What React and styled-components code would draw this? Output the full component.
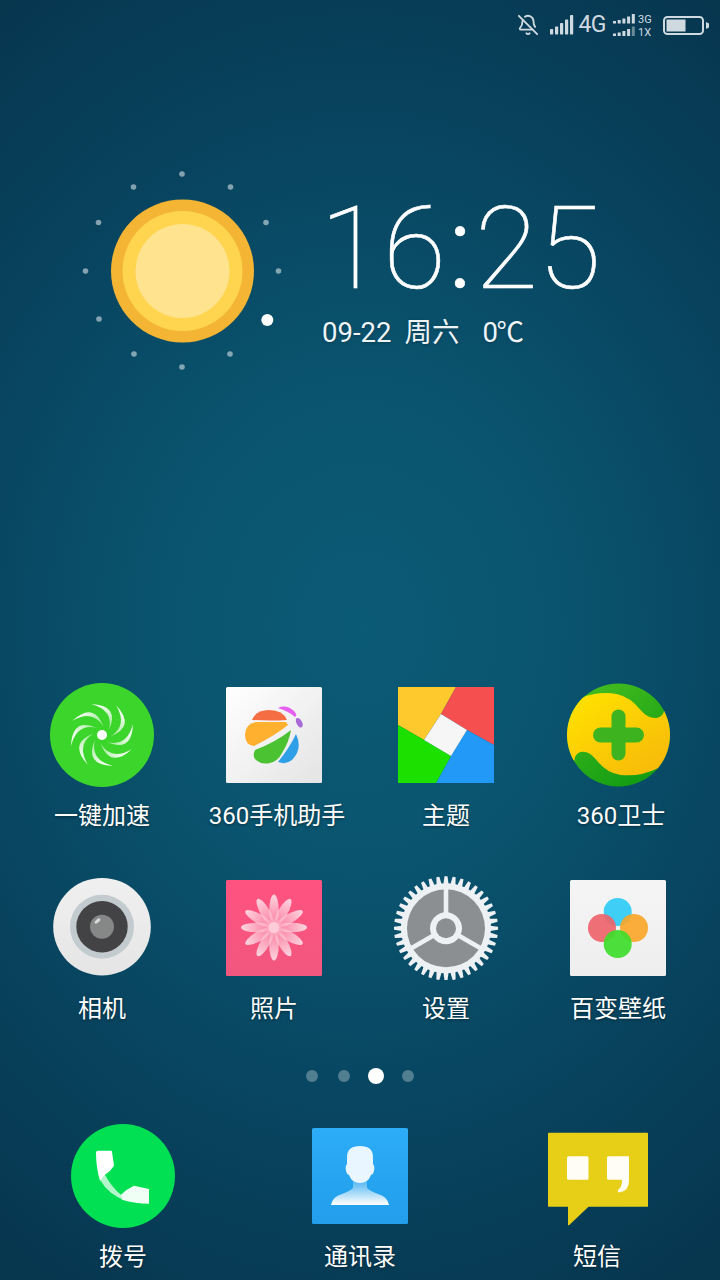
import React from 'react'
import styled, { createGlobalStyle } from 'styled-components'
import { BellOff } from 'lucide-react'

const GlobalStyle = createGlobalStyle`
html, body {
  margin: 0;
  padding: 0;
  width: 720px;
  height: 1280px;
  overflow: hidden;
}
* {
  box-sizing: border-box;
}
`

const Page = styled.div`
width: 720px;
height: 1280px;
overflow: hidden;
color: #fff;
font-family: Roboto, "Noto Sans CJK SC", sans-serif;
background: radial-gradient(ellipse 620px 760px at 50% 49%, #0b5a76 0%, #0a546f 32%, #08445f 66%, #07364f 100%);
`

const StatusBar = styled.div`
display: flex;
justify-content: flex-end;
align-items: center;
height: 50px;
padding-right: 11px;
color: #cfdae0;
`

const NetworkText = styled.span`
font-size: 23px;
font-weight: 400;
line-height: 50px;
margin: 0 7px 0 4px;
letter-spacing: -0.5px;
`

const Widget = styled.div`
display: flex;
align-items: flex-start;
height: 220px;
margin-top: 110px;
padding-left: 70px;
`

const ClockColumn = styled.div`
display: flex;
flex-direction: column;
margin-left: 22px;
`

const Clock = styled.div`
font-family: Roboto, sans-serif;
font-weight: 100;
font-size: 115px;
line-height: 100px;
margin-top: 39px;
margin-left: -2px;
letter-spacing: 0;
white-space: nowrap;
-webkit-text-stroke: 0.6px #fff;
`

const ClockColon = styled.span`
font-weight: 300;
margin: 0 3px 0 2px;
`

const DateRow = styled.div`
display: flex;
font-size: 27.5px;
line-height: 36px;
margin-top: 16px;
color: #eef4f7;
text-shadow: 0 1px 3px rgba(0, 0, 0, 0.25);
`

const DatePart = styled.span`
margin-right: ${({ $gap }) => $gap || 0}px;
letter-spacing: ${({ $tight }) => ($tight ? '-1.5px' : 'normal')};
white-space: nowrap;
`

const AppGrid = styled.div`
display: grid;
grid-template-columns: repeat(4, 172px);
row-gap: 43px;
justify-content: center;
margin-top: 303px;
`

const AppCell = styled.div`
display: flex;
flex-direction: column;
align-items: center;
`

const IconSlot = styled.div`
width: 104px;
height: 104px;
`

const Icon = styled.svg`
display: block;
width: 104px;
height: 104px;
`

const Label = styled.div`
margin-top: 12px;
padding-left: ${({ $shift }) => $shift || 0}px;
font-size: 24px;
line-height: 34px;
white-space: nowrap;
text-shadow: 0 1px 3px rgba(0, 0, 0, 0.45);
`

const Pager = styled.div`
display: flex;
align-items: center;
justify-content: center;
height: 16px;
gap: 20px;
margin-top: 42px;
`

const PagerDot = styled.span`
width: ${({ $active }) => ($active ? 16 : 12)}px;
height: ${({ $active }) => ($active ? 16 : 12)}px;
margin: 0 ${({ $active }) => ($active ? -2 : 0)}px;
border-radius: 50%;
background: ${({ $active }) => ($active ? '#fff' : 'rgba(255, 255, 255, 0.3)')};
`

const Dock = styled.div`
display: grid;
grid-template-columns: repeat(3, 237px);
justify-content: center;
margin-top: 40px;
`

const SignalBars = () => (
  <svg width="24" height="50" viewBox="0 0 24 50" fill="#cfdae0">
    <rect x="0" y="29" width="3.2" height="5.5" rx="0.8" />
    <rect x="5" y="26.5" width="3.2" height="8" rx="0.8" />
    <rect x="10" y="23" width="3.2" height="11.5" rx="0.8" />
    <rect x="15" y="19.5" width="3.2" height="15" rx="0.8" />
    <rect x="20" y="15" width="3.2" height="19.5" rx="0.8" />
  </svg>
)

const DualSignal = () => {
  const bars = [2.5, 3.5, 5, 7, 9.5]
  return (
    <svg width="40" height="50" viewBox="0 0 40 50" fill="#cfdae0">
      {bars.map((h, i) => (
        <rect key={`a${i}`} x={i * 4.7} y={23.5 - h} width="3" height={h} />
      ))}
      {bars.map((h, i) => (
        <rect key={`b${i}`} x={i * 4.7} y={36 - h} width="3" height={h} opacity={i === 4 ? 0.5 : 1} />
      ))}
      <text x="25" y="23" fontSize="11" fontFamily="Roboto, sans-serif">3G</text>
      <text x="25" y="35.5" fontSize="11" fontFamily="Roboto, sans-serif">1X</text>
    </svg>
  )
}

const Battery = () => (
  <svg width="47" height="50" viewBox="0 0 47 50" style={{ marginLeft: 9 }}>
    <rect x="2" y="17" width="39" height="17" rx="3.5" fill="none" stroke="#cfdae0" strokeWidth="2" />
    <rect x="4.5" y="19.5" width="19" height="12" fill="#cfdae0" />
    <path d="M44 22 L47 23.5 L47 27.5 L44 29 Z" fill="#cfdae0" />
  </svg>
)

const SunIcon = () => {
  const dots = [
    [112, 14], [63.5, 27], [28.5, 62.5], [15.5, 111], [29, 159], [64, 194],
    [112, 207], [160, 194], [208.5, 111], [196, 62.5], [160.5, 27]
  ]
  return (
    <svg width="230" height="220" viewBox="0 0 230 220">
      {dots.map(([cx, cy]) => (
        <circle key={`${cx}-${cy}`} cx={cx} cy={cy} r="2.8" fill="#fff" opacity="0.5" />
      ))}
      <circle cx="197.3" cy="160" r="6" fill="#fff" />
      <circle cx="112.5" cy="111" r="71.5" fill="#f3b533" />
      <circle cx="112.5" cy="111" r="60" fill="#ffd54f" />
      <circle cx="112.5" cy="111" r="47" fill="#ffe38e" />
    </svg>
  )
}

const SpeedIcon = () => (
  <Icon viewBox="0 0 104 104">
    <defs>
      <linearGradient id="blade" gradientUnits="userSpaceOnUse" x1="0" y1="-31" x2="6" y2="-5">
        <stop offset="0" stopColor="#fff" stopOpacity="0.95" />
        <stop offset="1" stopColor="#fff" stopOpacity="0.5" />
      </linearGradient>
    </defs>
    <circle cx="52" cy="52" r="52" fill="#3cd52b" />
    {Array.from({ length: 8 }, (_, i) => (
      <path
        key={i}
        d="M-11 -31 Q 18 -30 7 -5 Q 12 -25 -11 -31 Z"
        transform={`translate(52 52) rotate(${i * 45})`}
        fill="url(#blade)"
      />
    ))}
    <circle cx="52" cy="52" r="5" fill="#fff" />
  </Icon>
)

const HelperIcon = () => (
  <Icon viewBox="0 0 104 104">
    <defs>
      <linearGradient id="helperBg" x1="0" y1="0" x2="1" y2="1">
        <stop offset="0" stopColor="#fff" />
        <stop offset="1" stopColor="#e4e4e4" />
      </linearGradient>
    </defs>
    <g transform="translate(4 4)">
      <rect width="96" height="96" rx="1.5" fill="url(#helperBg)" />
      <path d="M26 33 Q 30 23 43 23 Q 57 23 61 33 Q 44 34 26 33 Z" fill="#f46d43" />
      <path d="M60 35 L 30 35 Q 19 37 19 48 Q 19 58 28 59 Q 50 48 62 38 Z" fill="#ffb02e" />
      <path d="M65 43 Q 50 55 29 63 Q 26 70 30 73 Q 36 78 44 76 Q 52 74 56 66 Q 63 55 65 43 Z" fill="#4bc231" />
      <path d="M70 47 Q 64 60 52 75 Q 60 78 66 73 Q 77 62 70 47 Z" fill="#2f9fe8" />
      <path d="M52 21 Q 60 17 68 24 Q 72 28 69 30 Q 62 24 52 21 Z" fill="#e660f0" />
      <ellipse cx="73.3" cy="35.7" rx="2.8" ry="5.2" transform="rotate(-28 73.3 35.7)" fill="#a86ad8" />
    </g>
  </Icon>
)

const ThemeIcon = () => (
  <Icon viewBox="0 0 104 104">
    <g transform="translate(4 4)">
      <polygon points="0,0 58,0 43,27 26,53 0,38" fill="#fdc92c" />
      <polygon points="58,0 96,0 96,58 69,43 43,27" fill="#f54f4f" />
      <polygon points="96,58 96,96 38,96 53,69 69,43" fill="#2299f7" />
      <polygon points="0,38 26,53 53,69 38,96 0,96" fill="#1be000" />
      <polygon points="43,27 69,43 53,69 26,53" fill="#f6f6f6" />
    </g>
  </Icon>
)

const GuardIcon = () => (
  <Icon viewBox="0 0 104 104">
    <defs>
      <linearGradient id="guardGreen" x1="0.2" y1="0" x2="0.8" y2="1">
        <stop offset="0" stopColor="#45bd1f" />
        <stop offset="1" stopColor="#0f9a12" />
      </linearGradient>
      <linearGradient id="guardYellow" x1="0.1" y1="0.1" x2="0.9" y2="0.9">
        <stop offset="0" stopColor="#ffe100" />
        <stop offset="1" stopColor="#f7b90a" />
      </linearGradient>
      <clipPath id="guardClip">
        <circle cx="0" cy="0" r="51.5" />
      </clipPath>
    </defs>
    <g transform="translate(52.5 52)">
      <circle r="51.5" fill="url(#guardGreen)" />
      <path
        clipPath="url(#guardClip)"
        d="M-60 -20 L-38 -37 Q -20 -44 -2 -41 Q 12 -38 22 -25 Q 30 -16 38 -17 Q 45 -18 46 -26 L60 -10 L60 25 L40 33 Q 22 42 2 40 Q -12 38 -22 25 Q -30 15 -38 17 Q -44 19 -44 26 L-60 10 Z"
        fill="url(#guardYellow)"
      />
      <rect x="-25.5" y="-7.5" width="51" height="15" rx="7.5" fill="#3db31f" />
      <rect x="-7" y="-25.5" width="14" height="51" rx="7" fill="#3db31f" />
    </g>
  </Icon>
)

const CameraIcon = () => (
  <Icon viewBox="0 0 104 104">
    <defs>
      <linearGradient id="cameraBody" x1="0" y1="0" x2="0" y2="1">
        <stop offset="0" stopColor="#f0f0f0" />
        <stop offset="1" stopColor="#e5e5e5" />
      </linearGradient>
    </defs>
    <circle cx="52" cy="50.7" r="48.8" fill="url(#cameraBody)" />
    <circle cx="52" cy="50.7" r="32" fill="#c3cbcf" />
    <circle cx="52" cy="50.7" r="25.7" fill="#434244" />
    <circle cx="52" cy="50.7" r="12" fill="#868888" />
    <ellipse cx="47.5" cy="45" rx="3.4" ry="1.6" transform="rotate(-40 47.5 45)" fill="#d8d8d8" />
  </Icon>
)

const PhotosIcon = () => (
  <Icon viewBox="0 0 104 104">
    <defs>
      <linearGradient id="photosBg" x1="0" y1="0" x2="0" y2="1">
        <stop offset="0" stopColor="#ff5280" />
        <stop offset="1" stopColor="#f1577f" />
      </linearGradient>
      <linearGradient id="petal" x1="0" y1="0" x2="0" y2="1">
        <stop offset="0" stopColor="#ffdbe4" stopOpacity="0.95" />
        <stop offset="1" stopColor="#ffdbe4" stopOpacity="0.25" />
      </linearGradient>
    </defs>
    <g transform="translate(4 4)">
      <rect width="96" height="96" rx="1.5" fill="url(#photosBg)" />
      <g transform="translate(48 47.5)">
        {Array.from({ length: 12 }, (_, i) => (
          <ellipse key={i} cx="0" cy="-17" rx="4.8" ry="16" fill="url(#petal)" transform={`rotate(${i * 30})`} />
        ))}
        <circle r="5.5" fill="#ffcbd9" />
      </g>
    </g>
  </Icon>
)

const SettingsIcon = () => (
  <Icon viewBox="0 0 104 104">
    <g transform="translate(52 52.3)">
      {Array.from({ length: 40 }, (_, i) => (
        <polygon key={i} points="-2.6,-44 2.6,-44 1.5,-52 -1.5,-52" fill="#eef1f3" transform={`rotate(${i * 9})`} />
      ))}
      <circle r="45" fill="#eef1f3" />
      <circle r="39" fill="#8c8f91" />
      {[0, 120, 240].map((a) => (
        <rect key={a} x="-2.3" y="-40" width="4.6" height="30" fill="#eef1f3" transform={`rotate(${a})`} />
      ))}
      <circle r="16" fill="#eef1f3" />
      <circle r="10" fill="#8c8f91" />
    </g>
  </Icon>
)

const WallpaperIcon = () => (
  <Icon viewBox="0 0 104 104">
    <defs>
      <linearGradient id="wallBg" x1="0" y1="0" x2="0" y2="1">
        <stop offset="0" stopColor="#f5f5f5" />
        <stop offset="1" stopColor="#eeeeee" />
      </linearGradient>
    </defs>
    <g transform="translate(4 4)">
      <rect width="96" height="96" rx="1.5" fill="url(#wallBg)" />
      <circle cx="47.7" cy="32" r="14" fill="#35ccf5" opacity="0.95" />
      <circle cx="32" cy="48" r="14" fill="#ee6168" opacity="0.9" />
      <circle cx="64" cy="48" r="14" fill="#fba526" opacity="0.9" />
      <circle cx="47.7" cy="64" r="14" fill="#3edc2a" opacity="0.92" />
    </g>
  </Icon>
)

const PhoneIcon = () => (
  <Icon viewBox="0 0 104 104">
    <circle cx="52" cy="52" r="52" fill="#00e052" />
    <g transform="translate(52 51.7)">
      <path d="M-18 -1 Q -11 12 -2 19 L 4 25 Q -14 20 -23 4 Z" fill="#fff" opacity="0.7" />
      <path d="M-25 -25 L-12 -25 Q -11 -25 -11 -24 L-9 -10 Q -12 -5 -18 -1 L-23 5 Q -27 -8 -27 -23 Q -27 -25 -25 -25 Z" fill="#fff" />
      <path d="M-2 19 Q 4 13 11 10 L 25 13 Q 26 13 26 14 L 26 28 Q 12 28 -1 24 Z" fill="#f0fff5" />
    </g>
  </Icon>
)

const ContactsIcon = () => (
  <Icon viewBox="0 0 104 104">
    <defs>
      <linearGradient id="contactsBg" x1="0" y1="0" x2="0" y2="1">
        <stop offset="0" stopColor="#2dacf7" />
        <stop offset="1" stopColor="#229eeb" />
      </linearGradient>
      <linearGradient id="contactsBody" x1="0" y1="0" x2="0" y2="1">
        <stop offset="0" stopColor="#fff" stopOpacity="0.1" />
        <stop offset="1" stopColor="#fff" />
      </linearGradient>
    </defs>
    <g transform="translate(4 4)">
      <rect width="96" height="96" rx="1.5" fill="url(#contactsBg)" />
      <path d="M41 50 L41 60 Q 38 63 30 66 Q 20 69 19 77 L77 77 Q 76 69 66 66 Q 58 63 55 60 L55 50 Z" fill="url(#contactsBody)" />
      <path
        d="M48 18 Q 61 18 61 29 L61 36 Q 63 38 62 43 Q 61.5 46 59 47 Q 56 55 48 55 Q 40 55 37 47 Q 34.5 46 34 43 Q 33 38 35 36 L35 29 Q 35 18 48 18 Z"
        fill="#eaf6ff"
      />
    </g>
  </Icon>
)

const MessageIcon = () => (
  <Icon viewBox="0 0 104 104">
    <g transform="translate(0 0.7)">
      <path d="M3 9 Q 3 8 4 8 L 102 8 Q 103 8 103 9 L 103 81.5 Q 103 82 102 82 L 43.5 82 L 24 100.5 L 23 100.5 L 23 82 L 4 82 Q 3 82 3 81 Z" fill="#e6cf16" />
      <rect x="22" y="31.5" width="21.5" height="23.5" rx="1.5" fill="#fffdf5" />
      <path d="M63.5 31.5 L 83.5 31.5 Q 84 31.5 84 33 L 84 56 Q 84 66 75 67.5 L 73 67.5 Q 72 66 74 64 Q 77 62 77 55 L 64 55 Q 62 55 62 53.5 L 62 33 Q 62 31.5 63.5 31.5 Z" fill="#fffdf5" />
    </g>
  </Icon>
)

const apps = [
  { name: '一键加速', icon: SpeedIcon },
  { name: '360手机助手', icon: HelperIcon, shift: 6 },
  { name: '主题', icon: ThemeIcon },
  { name: '360卫士', icon: GuardIcon, shift: 6 },
  { name: '相机', icon: CameraIcon },
  { name: '照片', icon: PhotosIcon },
  { name: '设置', icon: SettingsIcon },
  { name: '百变壁纸', icon: WallpaperIcon }
]

const dockApps = [
  { name: '拨号', icon: PhoneIcon },
  { name: '通讯录', icon: ContactsIcon },
  { name: '短信', icon: MessageIcon }
]

const AppItem = ({ name, icon: AppIcon, shift }) => (
  <AppCell>
    <IconSlot>
      <AppIcon />
    </IconSlot>
    <Label $shift={shift}>{name}</Label>
  </AppCell>
)

const App = () => (
  <Page>
    <GlobalStyle />
    <StatusBar>
      <BellOff size={22} strokeWidth={2} style={{ marginRight: 11 }} />
      <SignalBars />
      <NetworkText>4G</NetworkText>
      <DualSignal />
      <Battery />
    </StatusBar>
    <Widget>
      <SunIcon />
      <ClockColumn>
        <Clock>16<ClockColon>:</ClockColon>25</Clock>
        <DateRow>
          <DatePart $gap={13}>09-22</DatePart>
          <DatePart $gap={23}>周六</DatePart>
          <DatePart $tight>0℃</DatePart>
        </DateRow>
      </ClockColumn>
    </Widget>
    <AppGrid>
      {apps.map((app) => (
        <AppItem key={app.name} {...app} />
      ))}
    </AppGrid>
    <Pager>
      <PagerDot />
      <PagerDot />
      <PagerDot $active />
      <PagerDot />
    </Pager>
    <Dock>
      {dockApps.map((app) => (
        <AppItem key={app.name} {...app} />
      ))}
    </Dock>
  </Page>
)

export default App
